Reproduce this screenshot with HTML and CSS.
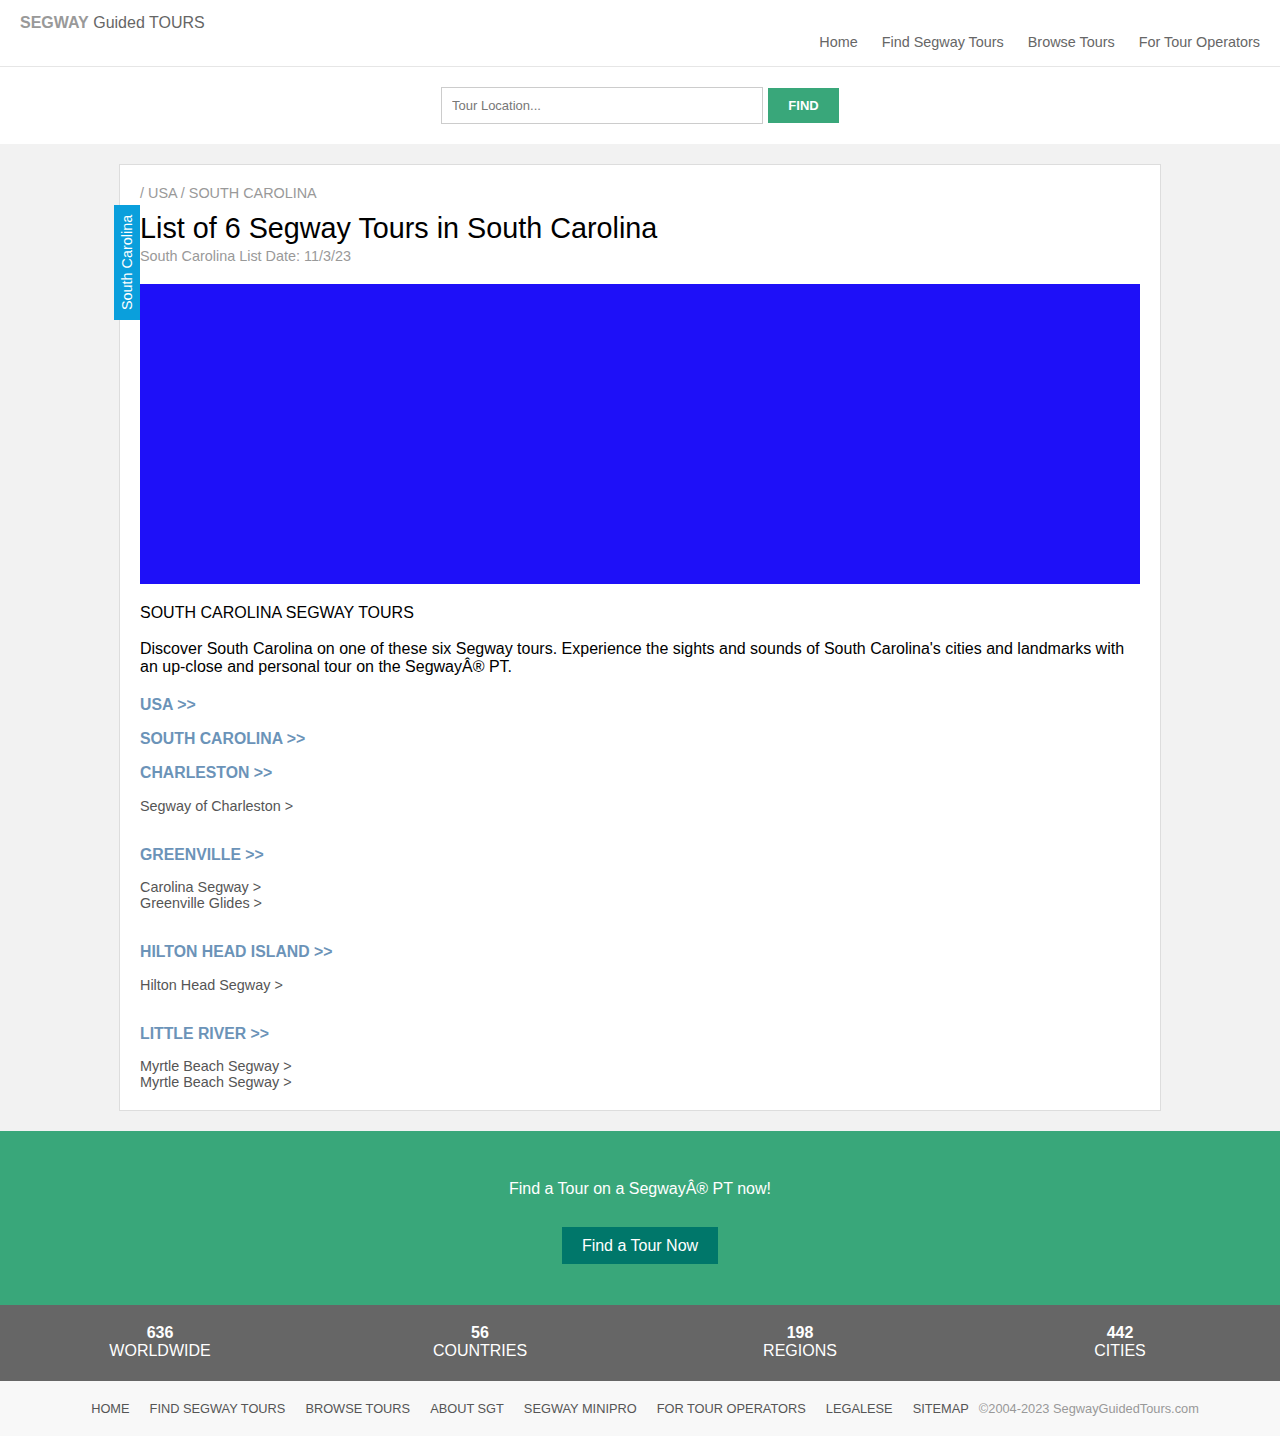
FILE: index.html
```html
<!DOCTYPE html>
<html>
<head>
<meta charset="utf-8">
<title>South Carolina Segway Tours</title>
<link rel="stylesheet" href="styles.css">
</head>
<body>
<header class="topbar">
  <div class="logo"><b>SEGWAY</b> Guided TOURS</div>
  <nav class="mainnav">
    <a href="#">Home</a>
    <a href="#">Find Segway Tours</a>
    <a href="#">Browse Tours</a>
    <a href="#">For Tour Operators</a>
  </nav>
</header>
<section class="search">
  <input class="search-input" type="text" placeholder="Tour Location...">
  <button class="search-btn">FIND</button>
</section>
<main class="page">
  <div class="card">
    <div class="sidetab">South Carolina</div>
    <div class="crumbs">/ USA / SOUTH CAROLINA</div>
    <h1 class="title">List of 6 Segway Tours in South Carolina</h1>
    <div class="date">South Carolina List Date: 11/3/23</div>
    <div class="mapbox"></div>
    <div class="subhead">SOUTH CAROLINA SEGWAY TOURS</div>
    <p class="intro">Discover South Carolina on one of these six Segway tours. Experience the sights and sounds of South Carolina's cities and landmarks with an up-close and personal tour on the SegwayÂ® PT.</p>
    <a class="region first" href="#">USA &gt;&gt;</a>
    <a class="region" href="#">SOUTH CAROLINA &gt;&gt;</a>
    <a class="region" href="#">CHARLESTON &gt;&gt;</a>
    <div class="tours"><a href="#">Segway of Charleston &gt;</a></div>
    <a class="region city" href="#">GREENVILLE &gt;&gt;</a>
    <div class="tours"><a href="#">Carolina Segway &gt;</a><a href="#">Greenville Glides &gt;</a></div>
    <a class="region city" href="#">HILTON HEAD ISLAND &gt;&gt;</a>
    <div class="tours"><a href="#">Hilton Head Segway &gt;</a></div>
    <a class="region city" href="#">LITTLE RIVER &gt;&gt;</a>
    <div class="tours"><a href="#">Myrtle Beach Segway &gt;</a><a href="#">Myrtle Beach Segway &gt;</a></div>
  </div>
</main>
<section class="cta">
  <div class="cta-text">Find a Tour on a SegwayÂ® PT now!</div>
  <a class="cta-btn" href="#">Find a Tour Now</a>
</section>
<section class="stats">
  <div class="stat"><b>636</b><span>WORLDWIDE</span></div>
  <div class="stat"><b>56</b><span>COUNTRIES</span></div>
  <div class="stat"><b>198</b><span>REGIONS</span></div>
  <div class="stat"><b>442</b><span>CITIES</span></div>
</section>
<footer class="footer">
  <a href="#">HOME</a>
  <a href="#">FIND SEGWAY TOURS</a>
  <a href="#">BROWSE TOURS</a>
  <a href="#">ABOUT SGT</a>
  <a href="#">SEGWAY MINIPRO</a>
  <a href="#">FOR TOUR OPERATORS</a>
  <a href="#">LEGALESE</a>
  <a href="#">SITEMAP</a>
  <span class="copy">©2004-2023 SegwayGuidedTours.com</span>
</footer>
</body>
</html>
```
FILE: styles.css
```css
* { box-sizing: border-box; }
body {
  margin: 0;
  font-family: "Liberation Sans", Arial, sans-serif;
  color: #000;
  background: #fff;
}
a { text-decoration: none; }

.topbar {
  height: 67px;
  border-bottom: 1px solid #e6e6e6;
  display: flex;
  justify-content: space-between;
  padding: 0 20px;
}
.logo {
  font-size: 16px;
  line-height: 18px;
  padding-top: 14px;
  color: #666;
}
.logo b { color: #999; }
.mainnav {
  display: flex;
  gap: 24px;
  padding-top: 33px;
}
.mainnav a {
  font-size: 14.4px;
  line-height: 18px;
  color: #666;
}

.search {
  display: flex;
  justify-content: center;
  align-items: center;
  padding: 20px 0;
  height: 77px;
  gap: 5px;
}
.search-input {
  width: 322px;
  height: 37px;
  border: 1px solid #ccc;
  padding: 0 10px;
  font-family: "Liberation Sans", Arial, sans-serif;
  font-size: 13px;
  color: #666;
  outline: none;
}
.search-input::placeholder { color: #777; }
.search-btn {
  width: 71px;
  height: 35px;
  border: 0;
  background: #39a77a;
  color: #fff;
  font-family: "Liberation Sans", Arial, sans-serif;
  font-size: 13px;
  font-weight: bold;
}

.page {
  background: #f2f2f2;
  padding: 20px 0;
}
.card {
  position: relative;
  width: 1042px;
  margin: 0 auto;
  background: #fff;
  border: 1px solid #ddd;
  padding: 20px 20px 20px;
  display: flex;
  flex-direction: column;
  align-items: flex-start;
}
.sidetab {
  position: absolute;
  left: -6px;
  top: 40px;
  width: 26px;
  height: 115px;
  background: #0a9fdc;
  color: #fff;
  font-size: 14.4px;
  writing-mode: vertical-rl;
  transform: rotate(180deg);
  display: flex;
  align-items: center;
  justify-content: center;
}
.crumbs {
  font-size: 14.4px;
  line-height: 16px;
  color: #999;
}
.title {
  margin: 10px 0 0;
  font-size: 28.75px;
  line-height: 32px;
  font-weight: normal;
  padding-top: 1px;
}
.date {
  margin-top: 4px;
  font-size: 14.4px;
  line-height: 16px;
  color: #999;
}
.mapbox {
  margin-top: 20px;
  width: 1000px;
  height: 300px;
  background: #1e10f8;
}
.subhead {
  margin-top: 20px;
  font-size: 16px;
  line-height: 18px;
}
.intro {
  margin: 18px 0 0;
  font-size: 16px;
  line-height: 18px;
}
.region {
  display: block;
  margin-top: 16px;
  font-size: 15.8px;
  line-height: 18px;
  font-weight: bold;
  color: #6b93b8;
}
.region.first { margin-top: 20px; }
.region.city { margin-top: 32.1px; }
.tours {
  margin-top: 15.5px;
  display: flex;
  flex-direction: column;
}
.tours a {
  font-size: 14.4px;
  line-height: 16px;
  color: #555;
}

.cta {
  background: #39a77a;
  height: 174px;
  padding-top: 49px;
  display: flex;
  flex-direction: column;
  align-items: center;
}
.cta-text {
  color: #fff;
  font-size: 16px;
  line-height: 18px;
}
.cta-btn {
  margin-top: 29px;
  width: 156px;
  height: 37px;
  background: #00776a;
  color: #fff;
  font-size: 16px;
  display: flex;
  align-items: center;
  justify-content: center;
}

.stats {
  background: #666;
  height: 76px;
  padding-top: 19px;
  display: grid;
  grid-template-columns: repeat(4, 1fr);
}
.stat {
  display: flex;
  flex-direction: column;
  align-items: center;
  color: #fff;
  font-size: 16px;
  line-height: 18px;
}

.footer {
  background: #f8f8f8;
  height: 55px;
  display: flex;
  justify-content: center;
  align-items: center;
}
.footer a {
  font-size: 12.8px;
  color: #555;
  padding: 0 10px;
}
.copy {
  font-size: 12.8px;
  color: #999;
  margin-left: 0;
}
```
